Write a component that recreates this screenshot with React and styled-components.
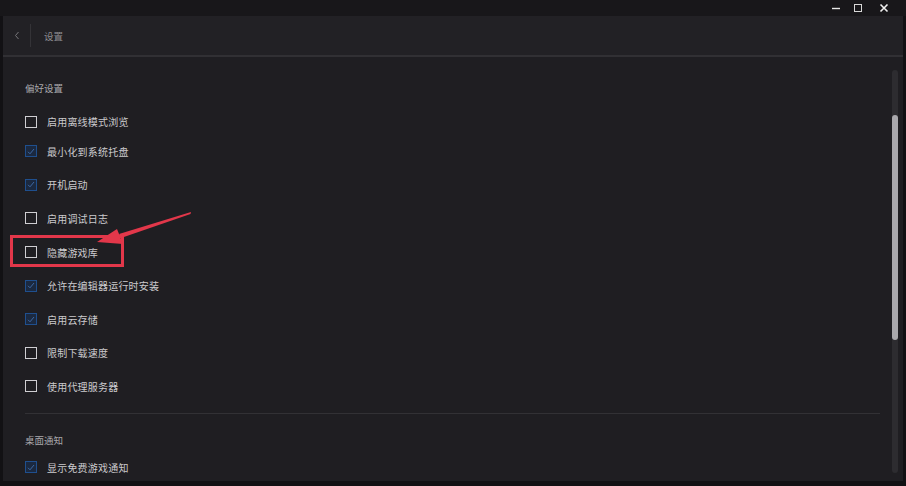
import React from 'react';
import styled, { createGlobalStyle } from 'styled-components';

const Global = createGlobalStyle`
  html, body {
    margin: 0;
    padding: 0;
    background: #121114;
  }
  * { box-sizing: border-box; }
`;

const Window = styled.div`
  position: relative;
  width: 906px;
  height: 486px;
  display: flex;
  flex-direction: column;
  background: #121114;
  font-family: "Noto Sans CJK SC", "Noto Sans", sans-serif;
  overflow: hidden;
`;

const TitleBar = styled.div`
  height: 16px;
  flex: none;
  background: #18171a;
  display: flex;
  justify-content: flex-end;
  align-items: center;
  padding-right: 16px;
  gap: 10px;
`;

const WinButton = styled.div`
  width: 12px;
  height: 12px;
  display: flex;
  align-items: center;
  justify-content: center;
  margin-left: ${({ $gap }) => $gap || 0}px;
`;

const Frame = styled.div`
  flex: 1;
  display: flex;
  flex-direction: column;
  margin: 0 3px 5px 3px;
  background: #1f1e22;
  min-height: 0;
`;

const Header = styled.div`
  height: 41px;
  flex: none;
  display: flex;
  align-items: center;
  background: #222125;
  border-bottom: 2px solid #313034;
`;

const BackButton = styled.div`
  width: 28px;
  height: 23px;
  display: flex;
  align-items: center;
  justify-content: center;
  border-right: 1px solid #343337;
  margin-right: 13px;
`;

const HeaderTitle = styled.span`
  font-size: 9.5px;
  color: #8d8c90;
`;

const Body = styled.div`
  flex: 1;
  display: flex;
  min-height: 0;
`;

const Content = styled.div`
  flex: 1;
  padding: 21px 6px 0 22px;
  display: flex;
  flex-direction: column;
`;

const SectionTitle = styled.div`
  height: 20px;
  flex: none;
  line-height: 20px;
  font-size: 9.5px;
  color: #a9a8ac;
  margin-top: ${({ $top }) => $top || 0}px;
`;

const Row = styled.div`
  height: ${({ $h }) => $h || 33.6}px;
  flex: none;
  display: flex;
  align-items: center;
  margin-top: ${({ $top }) => $top || 0}px;
`;

const Box = styled.div`
  width: 12px;
  height: 12px;
  margin-right: 10px;
  flex: none;
  display: flex;
  align-items: center;
  justify-content: center;
  border: 1.5px solid ${({ $on }) => ($on ? '#1f4f8e' : '#cfced2')};
  background: ${({ $on }) => ($on ? '#1b2940' : 'transparent')};
`;

const Label = styled.span`
  font-size: 10px;
  color: #cbcacd;
  letter-spacing: 0.2px;
`;

const Divider = styled.div`
  height: 1px;
  flex: none;
  background: #323135;
  margin-top: 10px;
`;

const ScrollColumn = styled.div`
  width: 17px;
  flex: none;
  padding: 13px 5px 8px 6px;
`;

const Track = styled.div`
  height: 100%;
  width: 6px;
  border-radius: 3px;
  background: #2d2c30;
  padding-top: 45px;
`;

const Thumb = styled.div`
  width: 6px;
  height: 225px;
  border-radius: 3px;
  background: #a9a8ac;
`;

const Highlight = styled.div`
  position: absolute;
  left: 10px;
  top: 235px;
  width: 114px;
  height: 32px;
  border: 3px solid #e2374a;
`;

const Arrow = styled.svg`
  position: absolute;
  left: 0;
  top: 0;
  pointer-events: none;
`;

const Check = () => (
  <svg width="8" height="7" viewBox="0 0 8 7">
    <path d="M1 3.8 L3 5.8 L7 1" fill="none" stroke="#3d68a3" strokeWidth="1" />
  </svg>
);

const CheckRow = ({ on, label, top, h }) => (
  <Row $top={top} $h={h}>
    <Box $on={on}>{on && <Check />}</Box>
    <Label>{label}</Label>
  </Row>
);

const prefs = [
  { label: '启用离线模式浏览', on: false },
  { label: '最小化到系统托盘', on: true },
  { label: '开机启动', on: true },
  { label: '启用调试日志', on: false },
  { label: '隐藏游戏库', on: false },
  { label: '允许在编辑器运行时安装', on: true },
  { label: '启用云存储', on: true },
  { label: '限制下载速度', on: false },
  { label: '使用代理服务器', on: false },
];

export default function App() {
  return (
    <>
      <Global />
      <Window>
        <TitleBar>
          <WinButton>
            <svg width="10" height="10" viewBox="0 0 10 10">
              <path d="M1 5.5 H9" stroke="#e8e8e8" strokeWidth="1.4" />
            </svg>
          </WinButton>
          <WinButton>
            <svg width="10" height="10" viewBox="0 0 10 10">
              <rect x="1.5" y="1.5" width="7" height="7" fill="none" stroke="#d8d8d8" strokeWidth="1" />
            </svg>
          </WinButton>
          <WinButton $gap={4}>
            <svg width="10" height="10" viewBox="0 0 10 10">
              <path d="M1.5 1.5 L8.5 8.5 M8.5 1.5 L1.5 8.5" stroke="#f0f0f0" strokeWidth="1.6" />
            </svg>
          </WinButton>
        </TitleBar>
        <Frame>
          <Header>
            <BackButton>
              <svg width="6" height="9" viewBox="0 0 6 9">
                <path d="M4.5 1 L1.5 4.5 L4.5 8" fill="none" stroke="#77767a" strokeWidth="1" />
              </svg>
            </BackButton>
            <HeaderTitle>设置</HeaderTitle>
          </Header>
          <Body>
            <Content>
              <SectionTitle>偏好设置</SectionTitle>
              {prefs.map((p, i) => (
                <CheckRow
                  key={p.label}
                  on={p.on}
                  label={p.label}
                  top={i === 0 ? 10.5 : 0}
                  h={i === 0 ? 26 : undefined}
                />
              ))}
              <Divider />
              <SectionTitle $top={16}>桌面通知</SectionTitle>
              <CheckRow on label="显示免费游戏通知" />
            </Content>
            <ScrollColumn>
              <Track>
                <Thumb />
              </Track>
            </ScrollColumn>
          </Body>
        </Frame>
        <Highlight />
        <Arrow width="906" height="486" viewBox="0 0 906 486">
          <polygon points="191,212 190.5,214 121,238 119,234" fill="#e2374a" />
          <polygon points="97,242 117,229 123,244" fill="#e2374a" />
        </Arrow>
      </Window>
    </>
  );
}
